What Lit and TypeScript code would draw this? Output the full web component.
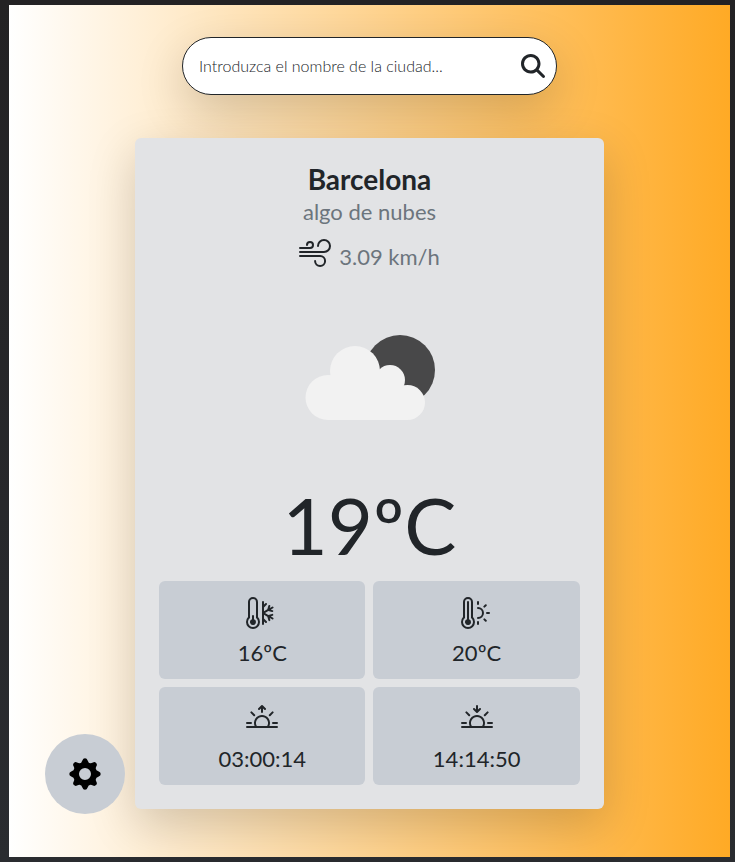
import { LitElement, html, css, svg } from "lit";
import { customElement, state } from "lit/decorators.js";

const RAYS =
  "M2.343 4.343a.5.5 0 0 1 .707 0l1.414 1.414a.5.5 0 0 1-.707.707L2.343 5.05a.5.5 0 0 1 0-.707zm11.314 0a.5.5 0 0 1 0 .707l-1.414 1.414a.5.5 0 1 1-.707-.707l1.414-1.414a.5.5 0 0 1 .707 0zM8 7a3 3 0 0 1 2.599 4.5H5.4A3 3 0 0 1 8 7zm3.71 4.5a4 4 0 1 0-7.418 0H.499a.5.5 0 0 0 0 1h15a.5.5 0 0 0 0-1h-3.79zM0 10a.5.5 0 0 1 .5-.5h2a.5.5 0 0 1 0 1h-2A.5.5 0 0 1 0 10zm13 0a.5.5 0 0 1 .5-.5h2a.5.5 0 0 1 0 1h-2a.5.5 0 0 1-.5-.5z";

const TUBE =
  "M1 2.5a2.5 2.5 0 0 1 5 0v7.55a3.5 3.5 0 1 1-5 0V2.5zM3.5 1A1.5 1.5 0 0 0 2 2.5v7.987l-.167.15a2.5 2.5 0 1 0 3.333 0L5 10.486V2.5A1.5 1.5 0 0 0 3.5 1z";

const ICONS = {
  wind: "M12.5 2A2.5 2.5 0 0 0 10 4.5a.5.5 0 0 1-1 0A3.5 3.5 0 1 1 12.5 8H.5a.5.5 0 0 1 0-1h12a2.5 2.5 0 0 0 0-5zm-7 1a1 1 0 0 0-1 1 .5.5 0 0 1-1 0 2 2 0 1 1 2 2h-5a.5.5 0 0 1 0-1h5a1 1 0 0 0 0-2zM0 9.5A.5.5 0 0 1 .5 9h10.042a3 3 0 1 1-3 3 .5.5 0 0 1 1 0 2 2 0 1 0 2-2H.5a.5.5 0 0 1-.5-.5z",
  cold:
    "M5 12.5a1.5 1.5 0 1 1-2-1.415V9.5a.5.5 0 0 1 1 0v1.585A1.5 1.5 0 0 1 5 12.5z" +
    TUBE +
    "M8.5 2a.5.5 0 0 1 .5.5v1.293l.646-.647a.5.5 0 0 1 .708.708L9 5.207v1.927l1.669-.963.495-1.85a.5.5 0 1 1 .966.26l-.237.882 1.12-.646a.5.5 0 0 1 .5.866l-1.12.646.884.237a.5.5 0 1 1-.26.966l-1.848-.495L9.5 8l1.669.963 1.849-.495a.5.5 0 1 1 .258.966l-.883.237 1.12.646a.5.5 0 0 1-.5.866l-1.12-.646.237.883a.5.5 0 1 1-.966.258L10.67 9.83 9 8.866v1.927l1.354 1.353a.5.5 0 0 1-.708.708L9 12.207V13.5a.5.5 0 0 1-1 0v-11a.5.5 0 0 1 .5-.5z",
  warm:
    "M5 12.5a1.5 1.5 0 1 1-2-1.415V2.5a.5.5 0 0 1 1 0v8.585A1.5 1.5 0 0 1 5 12.5z" +
    TUBE +
    "M8.5 2a.5.5 0 0 1 .5.5v1a.5.5 0 0 1-1 0v-1a.5.5 0 0 1 .5-.5zm4.243 1.757a.5.5 0 0 1 0 .707l-.707.708a.5.5 0 1 1-.708-.708l.708-.707a.5.5 0 0 1 .707 0zM8 5.5a.5.5 0 0 1 .5-.5 3 3 0 1 1 0 6 .5.5 0 0 1 0-1 2 2 0 0 0 0-4 .5.5 0 0 1-.5-.5zM12.5 8a.5.5 0 0 1 .5-.5h1a.5.5 0 1 1 0 1h-1a.5.5 0 0 1-.5-.5zm-1.172 2.828a.5.5 0 0 1 .708 0l.707.708a.5.5 0 0 1-.707.707l-.708-.707a.5.5 0 0 1 0-.708zM8.5 12a.5.5 0 0 1 .5.5v1a.5.5 0 0 1-1 0v-1a.5.5 0 0 1 .5-.5z",
  sunrise:
    "M7.646 1.146a.5.5 0 0 1 .708 0l1.5 1.5a.5.5 0 0 1-.708.708L8.5 2.707V4.5a.5.5 0 0 1-1 0V2.707l-.646.647a.5.5 0 1 1-.708-.708l1.5-1.5z" + RAYS,
  sunset:
    "M7.646 4.854a.5.5 0 0 0 .708 0l1.5-1.5a.5.5 0 0 0-.708-.708l-.646.647V1.5a.5.5 0 0 0-1 0v1.793l-.646-.647a.5.5 0 1 0-.708.708l1.5 1.5z" + RAYS,
};

/** Outline of an eight-toothed gear with rounded tips and a round hole, centred on 0,0. */
function gearPath(): string {
  const at = (radius: number, angle: number) =>
    `${(radius * Math.cos(angle)).toFixed(2)} ${(radius * Math.sin(angle)).toFixed(2)}`;
  const step = Math.PI / 4;
  const half = 0.18;
  let d = `M${at(14, -half)}`;
  for (let i = 0; i < 8; i++) {
    const a = i * step;
    d += `A2.6 2.6 0 0 1 ${at(14, a + half)}Q${at(10, a + step / 2)} ${at(14, a + step - half)}`;
  }
  return d + "ZM6 0A6 6 0 1 0 -6 0A6 6 0 1 0 6 0Z";
}

const icon = (name: keyof typeof ICONS) => html`
  <svg class="icon" viewBox="0 0 16 16" aria-hidden="true">${svg`<path fill-rule="evenodd" d=${ICONS[name]} />`}</svg>
`;

interface Reading {
  icon: keyof typeof ICONS;
  label: string;
  value: string;
}

@customElement("app-root")
export class AppRoot extends LitElement {
  static styles = css`
    :host {
      display: block;
      box-sizing: border-box;
      min-height: 100vh;
      padding: 5px 5px 5px 9px;
      background: linear-gradient(#232224, #2a2c30);
      color: #212529;
      font-family: Lato, sans-serif;
      font-size: 22px;
    }
    .page {
      position: relative;
      box-sizing: border-box;
      min-height: calc(100vh - 10px);
      padding: 32px 0 48px;
      display: flex;
      flex-direction: column;
      align-items: center;
      gap: 43px;
      background: linear-gradient(90deg, #ffffff, #ffaa25);
    }
    .search {
      box-sizing: border-box;
      width: 52%;
      height: 58px;
      padding: 0 11px 0 16px;
      display: flex;
      align-items: center;
      gap: 8px;
      border: 1px solid #212529;
      border-radius: 29px;
      background: #fff;
      box-shadow: 0 16px 48px rgba(0, 0, 0, 0.175);
    }
    .field {
      flex: 1;
      min-width: 0;
      padding: 0;
      border: 0;
      outline: 0;
      background: none;
      color: #212529;
      font: 300 16px/24px Lato, sans-serif;
    }
    .field::placeholder {
      color: #212529;
      opacity: 1;
    }
    .go,
    .settings {
      display: flex;
      align-items: center;
      justify-content: center;
      padding: 0;
      border: 0;
      background: none;
      color: inherit;
      cursor: pointer;
    }
    .glass {
      width: 24px;
      height: 24px;
      fill: currentColor;
    }
    .card {
      box-sizing: border-box;
      width: 65%;
      padding: 24px;
      border-radius: 6px;
      background: #e2e3e5;
      box-shadow: 0 16px 48px rgba(0, 0, 0, 0.175);
      text-align: center;
    }
    .city {
      margin: 0;
      font-size: 28px;
      line-height: 34px;
      font-weight: 700;
    }
    .sky {
      margin: 0;
      line-height: 32px;
      color: #6c757d;
    }
    .wind {
      margin: 9px 0 0;
      display: flex;
      justify-content: center;
      gap: 8px;
      line-height: 40px;
    }
    .speed {
      color: #6c757d;
    }
    .icon {
      display: block;
      width: 32px;
      height: 32px;
      fill: currentColor;
    }
    .cloud {
      display: block;
      width: 160px;
      height: 112px;
      margin: 43px auto 45px;
    }
    .temp {
      margin: 0 0 8px;
      font-size: 78px;
      line-height: 96px;
    }
    .grid {
      margin: 0;
      display: grid;
      grid-template-columns: 1fr 1fr;
      gap: 8px;
    }
    .tile {
      padding: 16px 8px 8px;
      display: flex;
      flex-direction: column;
      align-items: center;
      gap: 6px;
      border-radius: 6px;
      background: #c8cdd4;
    }
    .value {
      margin: 0;
      line-height: 36px;
    }
    .settings {
      position: absolute;
      left: 36px;
      bottom: 43px;
      width: 80px;
      height: 80px;
      border-radius: 50%;
      background: #c8cdd4;
      color: #000;
    }
    .gear {
      width: 34px;
      height: 34px;
      fill: currentColor;
    }
  `;

  @state() private query = "";

  private readings: Reading[] = [
    { icon: "cold", label: "Mínima", value: "16ºC" },
    { icon: "warm", label: "Máxima", value: "20ºC" },
    { icon: "sunrise", label: "Amanecer", value: "03:00:14" },
    { icon: "sunset", label: "Atardecer", value: "14:14:50" },
  ];

  private onInput(e: Event) {
    this.query = (e.target as HTMLInputElement).value;
  }

  render() {
    return html`
      <main class="page">
        <form class="search" role="search" @submit=${(e: Event) => e.preventDefault()}>
          <input
            class="field"
            type="text"
            aria-label="Ciudad"
            placeholder="Introduzca el nombre de la ciudad..."
            .value=${this.query}
            @input=${this.onInput}
          />
          <button class="go" type="submit" aria-label="Buscar">
            <svg class="glass" viewBox="0 0 512 512" aria-hidden="true">
              <path
                d="M416 208c0 45.9-14.9 88.3-40 122.7L502.6 457.4c12.5 12.5 12.5 32.8 0 45.3s-32.8 12.5-45.3 0L330.7 376c-34.4 25.2-76.8 40-122.7 40C93.1 416 0 322.9 0 208S93.1 0 208 0S416 93.1 416 208zM208 352a144 144 0 1 0 0-288 144 144 0 1 0 0 288z"
              />
            </svg>
          </button>
        </form>

        <section class="card">
          <h1 class="city">Barcelona</h1>
          <p class="sky">algo de nubes</p>
          <p class="wind">${icon("wind")}<span class="speed">3.09 km/h</span></p>
          <svg class="cloud" viewBox="-1 0 160 112" aria-hidden="true">
            <circle cx="110" cy="50" r="35" fill="#484849" />
            <g fill="#f2f2f2">
              <circle cx="38" cy="77.5" r="22.5" />
              <circle cx="65" cy="51" r="25" />
              <circle cx="100" cy="60" r="15" />
              <circle cx="117.5" cy="82.5" r="17.5" />
              <path d="M38 56L60 50H90L106 62L117 68V100H38Z" />
            </g>
          </svg>
          <p class="temp">19ºC</p>
          <div class="grid">
            ${this.readings.map(
              (r) => html`
                <div class="tile" role="group" aria-label=${r.label}>
                  ${icon(r.icon)}
                  <p class="value">${r.value}</p>
                </div>
              `
            )}
          </div>
        </section>

        <button class="settings" type="button" aria-label="Ajustes">
          <svg class="gear" viewBox="-17 -17 34 34" aria-hidden="true">
            <path fill-rule="evenodd" d=${gearPath()} />
          </svg>
        </button>
      </main>
    `;
  }
}
